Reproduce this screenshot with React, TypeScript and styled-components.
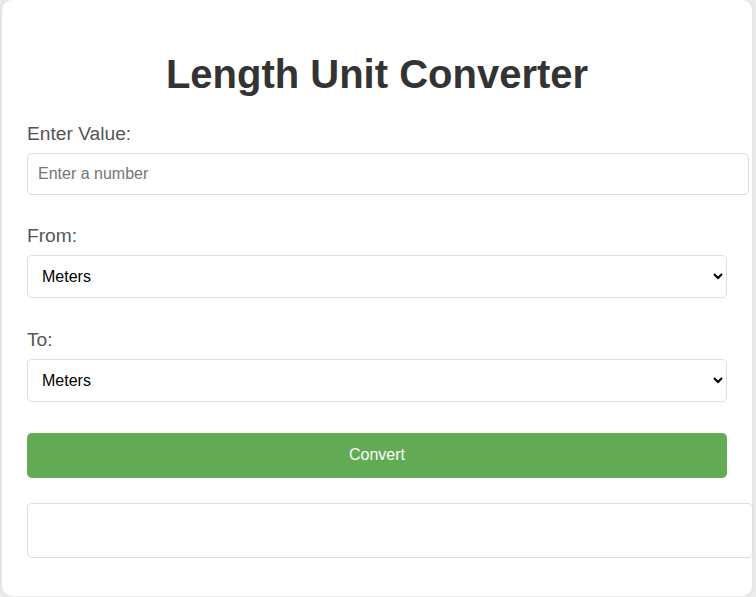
import React, { useState } from "react";
import styled, { createGlobalStyle } from "styled-components";

const GlobalStyle = createGlobalStyle`
  html, body {
    margin: 0;
    padding: 0;
    background: #ececec;
    font-family: "Liberation Sans", Arial, sans-serif;
  }
`;

const Page = styled.div`
  display: flex;
  justify-content: flex-start;
  padding-left: 2px;
`;

const Card = styled.div`
  width: 750px;
  box-sizing: border-box;
  background: #ffffff;
  border-radius: 10px;
  padding: 25px 25px 38px 25px;
  box-shadow: 0 0 6px rgba(0, 0, 0, 0.08);
  min-height: 596px;
`;

const Title = styled.h1`
  font-size: 40px;
  font-weight: bold;
  color: #333333;
  text-align: center;
  margin: 26.8px 0 25.8px;
`;

const Group = styled.div`
  margin-bottom: 30.8px;
`;

const Label = styled.label`
  display: block;
  font-size: 19.2px;
  line-height: 22px;
  color: #555555;
  margin-bottom: 8px;
`;

const TextInput = styled.input`
  display: block;
  width: 100%;
  box-sizing: content-box;
  height: 20px;
  padding: 10px;
  font-size: 16px;
  font-family: "Liberation Sans", Arial, sans-serif;
  border: 1px solid #dddddd;
  border-radius: 5px;
  margin: 0;
  outline: none;
  &::placeholder {
    color: #757575;
  }
`;

const Select = styled.select`
  display: block;
  width: 100%;
  box-sizing: border-box;
  height: 43px;
  padding: 10px;
  font-size: 16px;
  font-family: "Liberation Sans", Arial, sans-serif;
  border: 1px solid #dddddd;
  border-radius: 5px;
  background: #ffffff;
  color: #000000;
  margin: 0;
`;

const Button = styled.button`
  display: block;
  width: 100%;
  height: 45px;
  padding: 0 12px;
  font-size: 16px;
  font-family: "Liberation Sans", Arial, sans-serif;
  color: #ffffff;
  background: #62ab54;
  border: none;
  border-radius: 5px;
  cursor: pointer;
`;

const Result = styled.div`
  margin-top: 25px;
  width: 100%;
  box-sizing: content-box;
  padding: 12px;
  min-height: 29px;
  border: 1px solid #dddddd;
  border-radius: 5px;
  font-size: 18px;
  color: #333333;
`;

const units = ["Meters", "Kilometers", "Centimeters", "Millimeters", "Miles", "Yards", "Feet", "Inches"];

export default function App() {
  const [value, setValue] = useState("");
  const [from, setFrom] = useState("Meters");
  const [to, setTo] = useState("Meters");
  return (
    <>
      <GlobalStyle />
      <Page>
        <Card>
          <Title>Length Unit Converter</Title>
          <Group>
            <Label htmlFor="val">Enter Value:</Label>
            <TextInput
              id="val"
              type="number"
              placeholder="Enter a number"
              value={value}
              onChange={(e) => setValue(e.target.value)}
            />
          </Group>
          <Group>
            <Label htmlFor="from">From:</Label>
            <Select id="from" value={from} onChange={(e) => setFrom(e.target.value)}>
              {units.map((u) => (
                <option key={u} value={u}>{u}</option>
              ))}
            </Select>
          </Group>
          <Group>
            <Label htmlFor="to">To:</Label>
            <Select id="to" value={to} onChange={(e) => setTo(e.target.value)}>
              {units.map((u) => (
                <option key={u} value={u}>{u}</option>
              ))}
            </Select>
          </Group>
          <Button>Convert</Button>
          <Result />
        </Card>
      </Page>
    </>
  );
}
